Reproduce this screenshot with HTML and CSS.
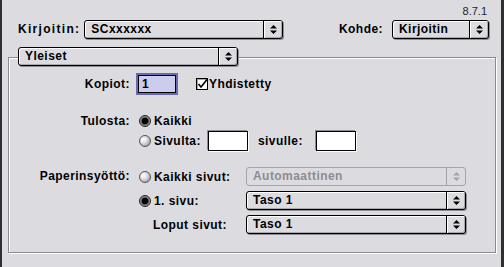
FILE: index.html
```html
<!DOCTYPE html>
<html>
<head>
<meta charset="utf-8">
<link rel="stylesheet" href="styles.css">
</head>
<body>
<div class="window">
  <div class="version">8.7.1</div>
  <div class="toprow">
    <span class="lbl wide">Kirjoitin:</span>
    <div class="popup w-printer"><span class="val">SCxxxxxx</span><span class="arr"><svg width="9" height="11" viewBox="0 0 9 11"><path d="M1 4.5 L8 4.5 L4.5 1 Z M1 6.5 L8 6.5 L4.5 10 Z" fill="#000"/></svg></span></div>
    <span class="lbl kohde">Kohde:</span>
    <div class="popup w-dest"><span class="val">Kirjoitin</span><span class="arr"><svg width="9" height="11" viewBox="0 0 9 11"><path d="M1 4.5 L8 4.5 L4.5 1 Z M1 6.5 L8 6.5 L4.5 10 Z" fill="#000"/></svg></span></div>
  </div>
  <div class="group">
    <div class="popup w-panel"><span class="val">Yleiset</span><span class="arr"><svg width="9" height="11" viewBox="0 0 9 11"><path d="M1 4.5 L8 4.5 L4.5 1 Z M1 6.5 L8 6.5 L4.5 10 Z" fill="#000"/></svg></span></div>

    <div class="row r-copies">
      <span class="lbl rl">Kopiot:</span>
      <div class="ctrls">
        <div class="field focused">1</div>
        <span class="check"><svg width="12" height="12" viewBox="0 0 12 12"><rect x="0.5" y="0.5" width="11" height="11" fill="#fff" stroke="#000"/><rect x="1" y="1" width="10" height="1" fill="#aaa"/><rect x="1" y="1" width="1" height="10" fill="#aaa"/><path d="M2.5 6 L5 9 L11 1.5" fill="none" stroke="#000" stroke-width="1.6"/></svg></span>
        <span class="lbl">Yhdistetty</span>
      </div>
    </div>

    <div class="row r-print">
      <span class="lbl rl">Tulosta:</span>
      <div class="opts">
        <div class="opt o1"><span class="radio on"></span><span class="lbl">Kaikki</span></div>
        <div class="opt o2"><span class="radio"></span><span class="lbl">Sivulta:</span><div class="field tf-from"></div><span class="lbl to-lbl">sivulle:</span><div class="field tf-to"></div></div>
      </div>
    </div>

    <div class="row r-paper">
      <span class="lbl rl">Paperinsyöttö:</span>
      <div class="paper">
        <div class="opt"><span class="radio"></span><span class="lbl">Kaikki sivut:</span></div>
        <div class="popup w-src disabled"><span class="val">Automaattinen</span><span class="arr"><svg width="9" height="11" viewBox="0 0 9 11"><path d="M1 4.5 L8 4.5 L4.5 1 Z M1 6.5 L8 6.5 L4.5 10 Z" fill="#a4a4aa"/></svg></span></div>
        <div class="opt"><span class="radio on"></span><span class="lbl">1. sivu:</span></div>
        <div class="popup w-src"><span class="val">Taso 1</span><span class="arr"><svg width="9" height="11" viewBox="0 0 9 11"><path d="M1 4.5 L8 4.5 L4.5 1 Z M1 6.5 L8 6.5 L4.5 10 Z" fill="#000"/></svg></span></div>
        <div class="opt rest"><span class="lbl">Loput sivut:</span></div>
        <div class="popup w-src"><span class="val">Taso 1</span><span class="arr"><svg width="9" height="11" viewBox="0 0 9 11"><path d="M1 4.5 L8 4.5 L4.5 1 Z M1 6.5 L8 6.5 L4.5 10 Z" fill="#000"/></svg></span></div>
      </div>
    </div>
  </div>
</div>
</body>
</html>
```

FILE: styles.css
```css
html, body {
  margin: 0;
  padding: 0;
  background: #dcdce0;
}

.window {
  width: 504px;
  height: 267px;
  box-sizing: border-box;
  border-left: 2px solid #2e2e30;
  border-right: 3px solid #2e2e30;
  background: #dcdce0;
  padding-top: 6px;
  font-family: "Liberation Sans", Arial, sans-serif;
  font-weight: bold;
  font-size: 12px;
  letter-spacing: 0.45px;
  color: #000;
}

.version {
  font-weight: normal;
  font-size: 11px;
  line-height: 11px;
  letter-spacing: 0;
  color: #222;
  text-align: right;
  padding-right: 14px;
}

.toprow {
  display: flex;
  align-items: center;
  margin-top: 2px;
  padding-left: 16px;
  padding-right: 12px;
  height: 20px;
}

.lbl {
  white-space: nowrap;
  line-height: 16px;
}

.wide {
  letter-spacing: 1.3px;
}

.kohde {
  margin-left: auto;
  margin-right: 9px;
}

/* popup menus */
.popup {
  display: flex;
  height: 19px;
  box-sizing: border-box;
  border: 1px solid #000;
  border-radius: 3px;
  background: #dcdce0;
  box-shadow: inset 1px 1px 0 #fff, inset -1px -1px 0 #a8a8ae, 1px 1px 0 #8c8c92;
}

.popup .val {
  flex: 1;
  padding-left: 6px;
  line-height: 17px;
  white-space: nowrap;
  overflow: hidden;
}

.popup .arr {
  width: 18px;
  border-left: 1px solid #000;
  display: flex;
  align-items: center;
  justify-content: center;
  box-shadow: inset 1px 1px 0 #fff;
  border-radius: 0 2px 2px 0;
}

.popup.disabled {
  border-color: #a4a4aa;
  color: #8c8c92;
  box-shadow: none;
}

.popup.disabled .arr {
  border-left-color: #a4a4aa;
  box-shadow: none;
}

.w-printer { width: 199px; margin-left: 4px; }
.w-dest { width: 97px; }
.w-panel { width: 220px; margin-top: -11px; margin-left: 9px; }
.w-src { width: 220px; }

/* group box */
.group {
  margin: 18px 5px 0 6px;
  height: 196px;
  box-sizing: border-box;
  border: 1px solid #8a8a90;
  box-shadow: inset 1px 1px 0 #fff, 1px 1px 0 #fff;
}

.row {
  display: grid;
  grid-template-columns: 121px 1fr;
  column-gap: 8px;
  align-items: start;
}

.rl {
  text-align: right;
}

.r-copies {
  margin-top: 9px;
  align-items: center;
}

.ctrls {
  display: flex;
  align-items: center;
  height: 18px;
}

.field {
  box-sizing: border-box;
  background: #fff;
  border: 1px solid #000;
  box-shadow: -1px -1px 0 #8c8c92, 1px 1px 0 #fff;
  height: 20px;
  width: 40px;
}

.field.focused {
  width: 38px;
  height: 18px;
  background: #ccccee;
  outline: 2px solid #6a6ab0;
  box-shadow: none;
  line-height: 16px;
  padding-left: 3px;
}

.check {
  display: flex;
  margin-left: 20px;
  margin-right: 1px;
}

.r-print {
  margin-top: 19px;
}

.r-print .rl,
.r-paper .rl {
  line-height: 18px;
}

.opts {
  display: flex;
  flex-direction: column;
}

.opt {
  display: flex;
  align-items: center;
}

.o1 { height: 18px; }
.o2 { height: 22px; }

.radio {
  width: 12px;
  height: 12px;
  border-radius: 50%;
  box-sizing: border-box;
  border: 1px solid #555;
  background: radial-gradient(circle at 35% 35%, #ffffff 0%, #e8e8ec 30%, #a0a0a8 80%, #7a7a80 100%);
  margin-left: 1px;
  margin-right: 3px;
  flex: none;
}

.radio.on {
  border: 1px solid #222;
  background: radial-gradient(circle at 50% 50%, #000 0%, #000 40%, #555 50%, #b8b8c0 75%, #777 100%);
}

.tf-from { margin-left: 7px; }
.to-lbl { margin-left: 10px; margin-right: 13px; }

.r-paper {
  margin-top: 15px;
}

.paper {
  display: grid;
  grid-template-columns: 100px 220px;
  column-gap: 8px;
  row-gap: 4px;
  grid-auto-rows: 20px;
  align-items: start;
}

.paper .opt {
  height: 19px;
}

.paper .rest {
  justify-content: flex-end;
  margin-right: 11px;
}
```
